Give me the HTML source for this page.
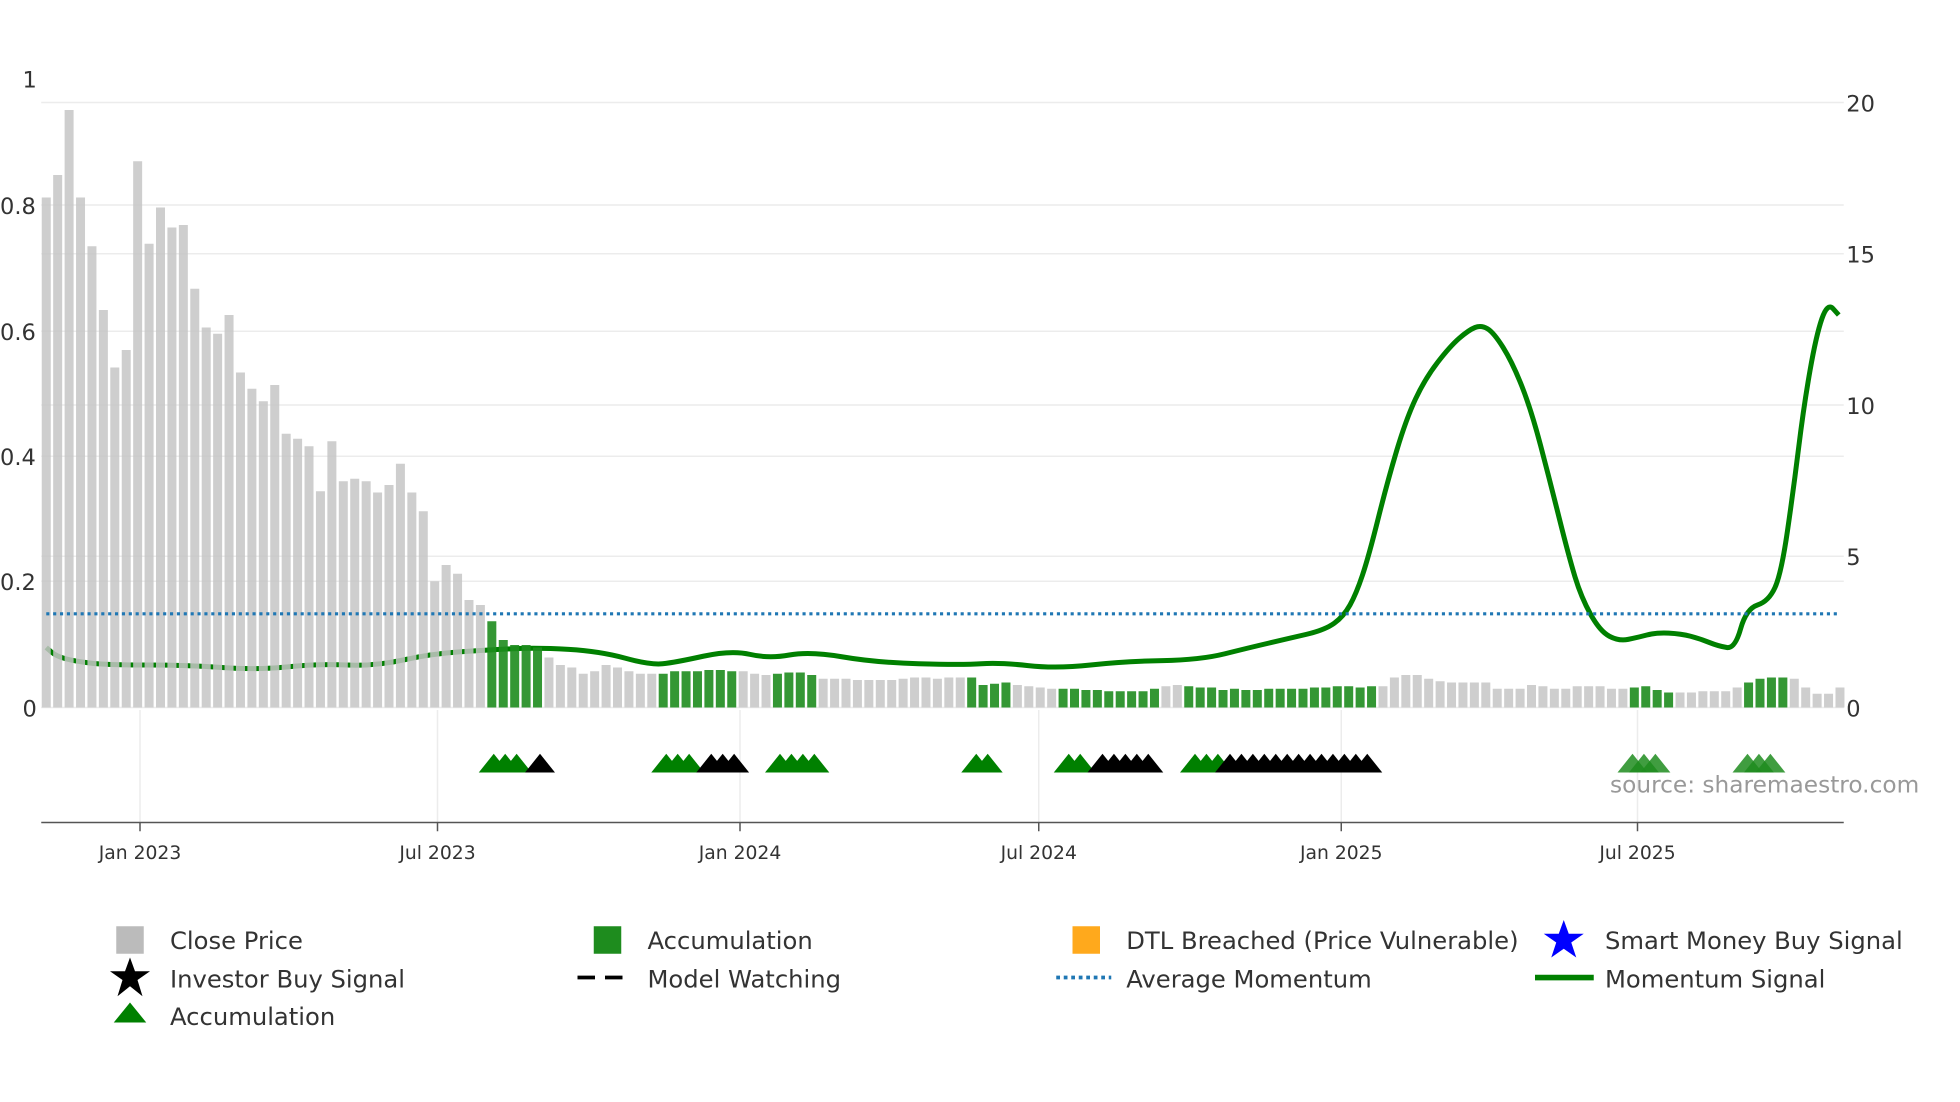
<!DOCTYPE html>
<html><head><meta charset="utf-8"><style>
html,body{margin:0;padding:0;background:#fff;width:1960px;height:1102px;overflow:hidden}
svg{display:block}
text{font-family:"DejaVu Sans","Liberation Sans",sans-serif;fill:#333}
</style></head><body>
<svg id="s" width="1960" height="1102" viewBox="0 0 1568 881.6" xmlns="http://www.w3.org/2000/svg">
<g stroke="#ececec" stroke-width="1.2">
<line x1="33" x2="1475" y1="82" y2="82"/><line x1="33" x2="1475" y1="164" y2="164"/>
<line x1="33" x2="1475" y1="203" y2="203"/><line x1="33" x2="1475" y1="265" y2="265"/>
<line x1="33" x2="1475" y1="324" y2="324"/><line x1="33" x2="1475" y1="365" y2="365"/>
<line x1="33" x2="1475" y1="445" y2="445"/><line x1="33" x2="1475" y1="465" y2="465"/>
<line x1="33" x2="1475" y1="566" y2="566"/>
<line x1="112" x2="112" y1="568" y2="658"/><line x1="350" x2="350" y1="568" y2="658"/>
<line x1="592" x2="592" y1="568" y2="658"/><line x1="831" x2="831" y1="568" y2="658"/>
<line x1="1073" x2="1073" y1="568" y2="658"/><line x1="1310" x2="1310" y1="568" y2="658"/>
</g>
<g font-size="18">
<text x="18" y="70">1</text><text x="0" y="171">0.8</text><text x="0" y="272">0.6</text>
<text x="0" y="372">0.4</text><text x="0" y="472">0.2</text><text x="18" y="573">0</text>
<text x="1477" y="89">20</text><text x="1477" y="210">15</text><text x="1477" y="331">10</text>
<text x="1477" y="452">5</text><text x="1477" y="573">0</text>
</g>
<path id="mom" fill="none" stroke="#008000" stroke-width="4" stroke-linejoin="round"/>
<g id="bars"></g>
<line x1="37" x2="1471" y1="491" y2="491" stroke="#1f77b4" stroke-width="2.5" stroke-dasharray="2.5 3"/>
<g id="tri"></g>
<text x="1288" y="634" font-size="18.6" style="fill:#999">source: sharemaestro.com</text>
<line x1="33" x2="1475" y1="658" y2="658" stroke="#555" stroke-width="1.2"/>
<g stroke="#555" stroke-width="1.2">
<line x1="112" x2="112" y1="658" y2="665"/><line x1="350" x2="350" y1="658" y2="665"/>
<line x1="592" x2="592" y1="658" y2="665"/><line x1="831" x2="831" y1="658" y2="665"/>
<line x1="1073" x2="1073" y1="658" y2="665"/><line x1="1310" x2="1310" y1="658" y2="665"/>
</g>
<g font-size="15" text-anchor="middle">
<text x="112" y="687">Jan 2023</text><text x="350" y="687">Jul 2023</text><text x="592" y="687">Jan 2024</text>
<text x="831" y="687">Jul 2024</text><text x="1073" y="687">Jan 2025</text><text x="1310" y="687">Jul 2025</text>
</g>
<g font-size="19.4">
<rect x="93" y="741" width="22" height="22" fill="#bbb"/><text x="136" y="759">Close Price</text>
<rect x="475" y="741" width="22" height="22" fill="#1e8c1e"/><text x="518" y="759">Accumulation</text>
<rect x="858" y="741" width="22" height="22" fill="#ffa91c"/><text x="901" y="759">DTL Breached (Price Vulnerable)</text>
<polygon points="1251,736 1255,747 1267,747 1257,754 1261,766 1251,759 1241,766 1245,754 1235,747 1247,747" fill="#0000ff"/><text x="1284" y="759">Smart Money Buy Signal</text>
<polygon points="104,766 108,777 120,777 110,784 114,797 104,789 94,797 98,784 88,777 100,777" fill="#000"/><text x="136" y="790">Investor Buy Signal</text>
<line x1="462" x2="506" y1="782" y2="782" stroke="#000" stroke-width="3" stroke-dasharray="14 8"/><text x="518" y="790">Model Watching</text>
<line x1="845" x2="889" y1="782" y2="782" stroke="#1f77b4" stroke-width="3" stroke-dasharray="3 3"/><text x="901" y="790">Average Momentum</text>
<line x1="1228" x2="1275" y1="782" y2="782" stroke="#008000" stroke-width="4.5"/><text x="1284" y="790">Momentum Signal</text>
<polygon points="104,802 117,818 91,818" fill="#008000"/><text x="136" y="820">Accumulation</text>
</g>
</svg>
<script>
var NS="http://www.w3.org/2000/svg";
var tops=[158,140,88,158,197,248,294,280,129,195,166,182,180,231,262,267,252,298,311,321,308,347,351,357,393,353,385,383,385,394,388,371,394,409,465,452,459,480,484,497,512,516,516,518,526,532,534,539,537,532,534,537,539,539,539,537,537,537,536,536,537,537,539,540,539,538,538,540,543,543,543,544,544,544,544,543,542,542,543,542,542,542,548,547,546,548,549,550,551,551,551,552,552,553,553,553,553,551,549,548,549,550,550,552,551,552,552,551,551,551,551,550,550,549,549,550,549,549,542,540,540,543,545,546,546,546,546,551,551,551,548,549,551,551,549,549,549,551,551,550,549,552,554,554,554,553,553,553,550,546,543,542,542,543,550,555,555];
var green=[[393,434],[530,590],[621,655],[778,803],[851,921],[953,1096],[1302,1335],[1395,1427]];
var g=document.getElementById('bars');
for(var i=0;i<158;i++){var x=37+i*9.14;var t=tops[i]||550;var isg=green.some(function(r){return x>=r[0]-3&&x<=r[1]+3});
var r=document.createElementNS(NS,'rect');r.setAttribute('x',x-3.6);r.setAttribute('width',7.2);r.setAttribute('y',t);r.setAttribute('height',566-t);
r.setAttribute('fill',isg?'#1e8c1e':'#c6c6c6');r.setAttribute('opacity',isg?0.9:0.85);g.appendChild(r);}
var p=[[37,518],[45,525],[60,529],[85,532],[150,532],[205,536],[255,531],[300,533],[345,523],[390,520],[430,518],[480,521],[520,532],[540,530],[585,520],[615,527],[648,521],[700,530],[770,532],[800,530],[845,535],[900,529],[960,528],[1000,518],[1030,511],[1060,504],[1075,493],[1085,475],[1095,445],[1110,385],[1125,335],[1140,303],[1160,277],[1175,264],[1185,260],[1195,266],[1210,290],[1225,328],[1240,385],[1255,445],[1265,478],[1280,505],[1295,513],[1310,510],[1325,506],[1345,507],[1360,511],[1375,517],[1388,519],[1397,487],[1415,481],[1425,459],[1435,390],[1443,325],[1453,268],[1462,242],[1471,252]];
var d="M"+p[0];for(var k=1;k<p.length;k++){var a=p[k-1],b=p[k];d+=" Q"+a[0]+","+a[1]+" "+((a[0]+b[0])/2)+","+((a[1]+b[1])/2);}d+=" L"+p[p.length-1];
document.getElementById('mom').setAttribute('d',d);
var tg=document.getElementById('tri');
function tri(x,c,op){var q=document.createElementNS(NS,'polygon');q.setAttribute('points',(x-12)+',618 '+x+',603 '+(x+12)+',618');q.setAttribute('fill',c);if(op)q.setAttribute('opacity',op);tg.appendChild(q);}
function run(a,b,c,op){for(var x=a;x<=b+0.1;x+=9.15)tri(x,c,op);}
run(395,422,'#008000');run(432,432,'#000');
run(533,560,'#008000');run(569,588,'#000');
run(624,652,'#008000');
run(781,799,'#008000');
run(855,873,'#008000');run(882,919,'#000');
run(956,975,'#008000');run(984,1095,'#000');
run(1306,1333,'#1e8c1e',0.85);run(1398,1425,'#1e8c1e',0.85);
</script>
</body></html>
